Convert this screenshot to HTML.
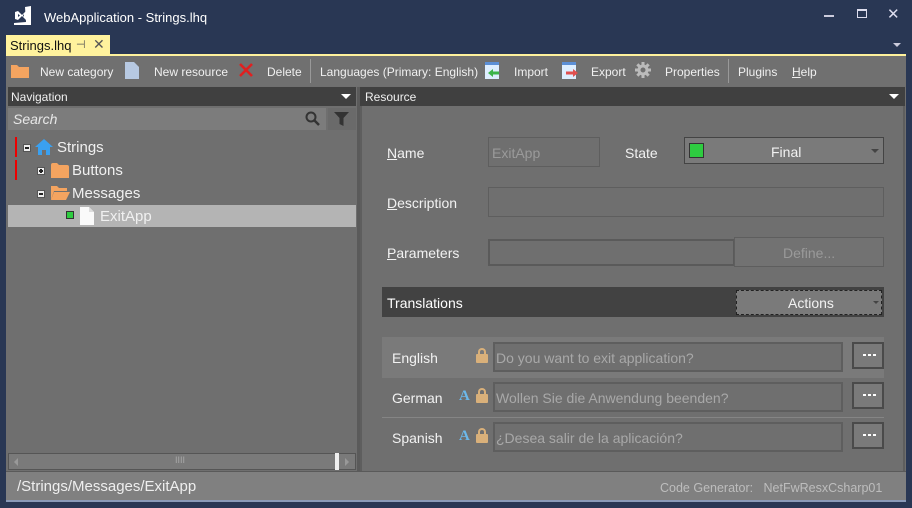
<!DOCTYPE html>
<html><head><meta charset="utf-8"><style>
*{margin:0;padding:0;box-sizing:border-box}
body{width:912px;height:508px;background:#293754;font-family:"Liberation Sans",sans-serif;position:relative;overflow:hidden;color:#f0f0f0}
.a{position:absolute}
.t{font-size:13px;white-space:nowrap}
.tb{font-size:12px;white-space:nowrap;position:absolute;top:65px}
.inp{position:absolute;background:#6f6f6f;border:1px solid #5e5e5e}
.lbl{position:absolute;font-size:14px;color:#f2f2f2;white-space:nowrap}
.btn3{position:absolute;width:32px;height:27px;border:2px solid #4a4a4a;background:#7a7a7a}
.btn3:after{content:"";position:absolute;left:9px;top:10px;width:3px;height:2px;background:#fff;box-shadow:5px 0 #fff,10px 0 #fff}
.lock{position:absolute;width:12px;height:9px;background:#d9b07a;border-radius:1px}
.lock:before{content:"";position:absolute;left:2px;top:-6px;width:8px;height:8px;border:2px solid #d9b07a;border-bottom:none;border-radius:4px 4px 0 0;box-sizing:border-box}
.A{position:absolute;color:#6cb8ea;font-weight:bold;font-family:"Liberation Serif",serif;font-size:15px}
</style></head><body>
<!-- title -->
<svg class="a" style="left:12px;top:6px" width="22" height="20" viewBox="0 0 22 20"><path d="M13 1 L19 0 L19 19 L2 19 L2 17 L14 16 Z" fill="#fff"/><path d="M3 6 L6 5 L10 9 L14 5 L14 14 L10 10 L6 14 L3 13 Z M6 8 L6 11 L8 9.5Z M11 9.5 L12 8 L12 11Z" fill="#fff" fill-rule="evenodd"/></svg>
<div class="a t" style="left:44px;top:10px;color:#fff">WebApplication - Strings.lhq</div>
<div class="a" style="left:824px;top:15px;width:10px;height:2px;background:#ccd"></div>
<div class="a" style="left:857px;top:9px;width:10px;height:9px;border:1px solid #dde;border-top-width:2px"></div>
<div class="a t" style="left:887px;top:5px;font-size:15px;color:#dde">✕</div>
<div class="a" style="left:893px;top:43px;border:4px solid transparent;border-top:4px solid #ccd"></div>
<!-- tab -->
<div class="a" style="left:6px;top:35px;width:104px;height:20px;background:#fff29d"></div>
<div class="a t" style="left:10px;top:38px;color:#111">Strings.lhq</div>
<div class="a t" style="left:76px;top:38px;color:#555;font-size:11px">⊣</div>
<div class="a t" style="left:93px;top:36px;color:#555;font-size:14px">✕</div>
<div class="a" style="left:6px;top:54px;width:900px;height:2px;background:#fff29d"></div>
<!-- doc area -->
<div class="a" style="left:6px;top:56px;width:900px;height:446px;background:#6f6f6f;border-bottom:2px solid #8a9ab8"></div>
<div class="a" style="left:6px;top:56px;width:900px;height:30px;background:#707070"></div>
<!-- toolbar -->
<svg class="a" style="left:11px;top:63px" width="18" height="15"><path d="M0 2 h6 l2 2 h10 v11 h-18z" fill="#f4a460"/></svg>
<div class="tb" style="left:40px">New category</div>
<svg class="a" style="left:125px;top:62px" width="14" height="17"><path d="M0 0 h9 l5 5 v12 h-14z" fill="#b7c9e2"/></svg>
<div class="tb" style="left:154px">New resource</div>
<svg class="a" style="left:239px;top:63px" width="14" height="14"><path d="M1 1 L13 13 M13 1 L1 13" stroke="#e02020" stroke-width="2.6"/></svg>
<div class="tb" style="left:267px">Delete</div>
<div class="a" style="left:310px;top:59px;width:1px;height:24px;background:#999"></div>
<div class="tb" style="left:320px">Languages (Primary: English)</div>
<svg class="a" style="left:485px;top:62px" width="16" height="18"><rect x="0" y="0" width="14" height="17" fill="#ddeeff"/><rect x="0" y="0" width="14" height="3" fill="#5b8fd6"/><path d="M3 11 l5 -4 v2.5 h6 v3 h-6 v2.5z" fill="#3bb44a"/></svg>
<div class="tb" style="left:514px">Import</div>
<svg class="a" style="left:562px;top:62px" width="17" height="18"><rect x="0" y="0" width="14" height="17" fill="#ddeeff"/><rect x="0" y="0" width="14" height="3" fill="#5b8fd6"/><path d="M16 11 l-5 -4 v2.5 h-7 v3 h7 v2.5z" fill="#e05050"/></svg>
<div class="tb" style="left:591px">Export</div>
<svg class="a" style="left:635px;top:62px" width="16" height="16" viewBox="0 0 16 16"><g fill="#bbb"><circle cx="8" cy="8" r="5.5"/><rect x="6.5" y="0" width="3" height="16"/><rect x="0" y="6.5" width="16" height="3"/><rect x="6.5" y="0" width="3" height="16" transform="rotate(45 8 8)"/><rect x="6.5" y="0" width="3" height="16" transform="rotate(-45 8 8)"/></g><circle cx="8" cy="8" r="2.5" fill="#707070"/></svg>
<div class="tb" style="left:665px">Properties</div>
<div class="a" style="left:728px;top:59px;width:1px;height:24px;background:#999"></div>
<div class="tb" style="left:738px">Plugins</div>
<div class="tb" style="left:792px"><u>H</u>elp</div>
<!-- nav -->
<div class="a" style="left:8px;top:87px;width:348px;height:19px;background:#404040"></div>
<div class="a t" style="left:11px;top:90px;font-size:12px">Navigation</div>
<div class="a" style="left:341px;top:94px;border:5px solid transparent;border-top:5px solid #fff"></div>
<div class="a" style="left:8px;top:108px;width:318px;height:22px;background:#7c7c7c"></div>
<div class="a t" style="left:13px;top:111px;font-size:14px;font-style:italic;color:#e8e8e8">Search</div>
<svg class="a" style="left:305px;top:111px" width="16" height="16"><circle cx="6" cy="6" r="4.5" fill="none" stroke="#333" stroke-width="2"/><path d="M9 9 l5 5" stroke="#333" stroke-width="2.5"/></svg>
<div class="a" style="left:328px;top:108px;width:28px;height:22px;background:#6a6a6a"></div>
<svg class="a" style="left:334px;top:112px" width="16" height="15"><path d="M0 0 h15 l-5.5 6 v8 l-4 -2 v-6z" fill="#333"/></svg>
<div class="a" style="left:15px;top:137px;width:2px;height:20px;background:#e00"></div>
<div class="a" style="left:15px;top:160px;width:2px;height:20px;background:#e00"></div>
<div class="a" style="left:23px;top:144px;width:8px;height:8px;background:#eee;border:1px solid #555"></div><div class="a" style="left:25px;top:147px;width:4px;height:2px;background:#222"></div>
<svg class="a" style="left:35px;top:139px" width="18" height="16"><path d="M9 0 L18 8 H15 V16 H11 V11 H7 V16 H3 V8 H0Z" fill="#3aa0f0"/></svg>
<div class="a t" style="left:57px;top:139px;font-size:15px">Strings</div>
<div class="a" style="left:37px;top:167px;width:8px;height:8px;background:#eee;border:1px solid #555"></div><div class="a" style="left:39px;top:170px;width:4px;height:2px;background:#222"></div><div class="a" style="left:40px;top:169px;width:2px;height:4px;background:#222"></div>
<svg class="a" style="left:51px;top:163px" width="18" height="15"><path d="M0 2 q0 -2 2 -2 h4 l2 2 h8 q2 0 2 2 v11 h-18z" fill="#f4a460"/></svg>
<div class="a t" style="left:72px;top:162px;font-size:15px">Buttons</div>
<div class="a" style="left:37px;top:190px;width:8px;height:8px;background:#eee;border:1px solid #555"></div><div class="a" style="left:39px;top:193px;width:4px;height:2px;background:#222"></div>
<svg class="a" style="left:51px;top:186px" width="19" height="14"><path d="M0 0 h6 l2 2 h8 v3 h-13 l-3 9z" fill="#f4a460"/><path d="M3 6 h16 l-4 8 h-15z" fill="#f4a460"/></svg>
<div class="a t" style="left:72px;top:185px;font-size:15px">Messages</div>
<div class="a" style="left:8px;top:205px;width:348px;height:22px;background:#b4b4b4"></div>
<div class="a" style="left:66px;top:211px;width:8px;height:8px;background:#2ecc40;border:1px solid #333"></div>
<svg class="a" style="left:80px;top:207px" width="14" height="18"><path d="M0 0 h9 l5 5 v13 h-14z" fill="#fafafa"/><path d="M9 0 v5 h5" fill="#ddd"/></svg>
<div class="a t" style="left:100px;top:208px;font-size:15px">ExitApp</div>
<div class="a" style="left:8px;top:453px;width:348px;height:17px;background:#7a7a7a;border:1px solid #555"></div>
<div class="a" style="left:14px;top:458px;border:4px solid transparent;border-right:4px solid #999;border-left:none"></div>
<div class="a" style="left:345px;top:458px;border:4px solid transparent;border-left:4px solid #999;border-right:none"></div>
<div class="a" style="left:335px;top:453px;width:4px;height:17px;background:#eee"></div>
<div class="a t" style="left:175px;top:455px;font-size:9px;color:#aaa">IIII</div>
<div class="a" style="left:357px;top:87px;width:3px;height:384px;background:#5a5a5a"></div>
<!-- resource -->
<div class="a" style="left:360px;top:87px;width:545px;height:19px;background:#404040"></div>
<div class="a t" style="left:365px;top:90px;font-size:12px">Resource</div>
<div class="a" style="left:889px;top:94px;border:5px solid transparent;border-top:5px solid #fff"></div>
<div class="a" style="left:360px;top:106px;width:2px;height:365px;background:#5e5e5e"></div>
<div class="a" style="left:903px;top:106px;width:2px;height:365px;background:#5e5e5e"></div>
<div class="lbl" style="left:387px;top:145px"><u>N</u>ame</div>
<div class="inp" style="left:488px;top:137px;width:112px;height:30px"></div>
<div class="lbl" style="left:492px;top:145px;color:#9a9a9a">ExitApp</div>
<div class="lbl" style="left:625px;top:145px">State</div>
<div class="a" style="left:684px;top:137px;width:200px;height:27px;background:#7a7a7a;border:1px solid #444"></div>
<div class="a" style="left:689px;top:143px;width:15px;height:15px;background:#2ecc40;border:1px solid #333"></div>
<div class="lbl" style="left:771px;top:144px">Final</div>
<div class="a" style="left:871px;top:149px;border:4px solid transparent;border-top:4px solid #444"></div>
<div class="lbl" style="left:387px;top:195px"><u>D</u>escription</div>
<div class="inp" style="left:488px;top:187px;width:396px;height:30px"></div>
<div class="lbl" style="left:387px;top:245px"><u>P</u>arameters</div>
<div class="inp" style="left:488px;top:239px;width:247px;height:27px;border-color:#5a5a5a;border-width:2px"></div>
<div class="a" style="left:734px;top:237px;width:150px;height:30px;background:#727272;border:1px solid #5e5e5e"></div>
<div class="lbl" style="left:783px;top:245px;color:#9a9a9a">Define...</div>
<div class="a" style="left:382px;top:287px;width:502px;height:30px;background:#424242"></div>
<div class="lbl" style="left:387px;top:295px;color:#fff">Translations</div>
<div class="a" style="left:736px;top:290px;width:146px;height:25px;background:#7a7a7a;border:1px dashed #222"></div>
<div class="lbl" style="left:788px;top:295px">Actions</div>
<div class="a" style="left:873px;top:301px;border:3px solid transparent;border-top:3px solid #444"></div>
<div class="a" style="left:382px;top:337px;width:502px;height:41px;background:#7a7a7a"></div>
<div class="lbl" style="left:392px;top:350px">English</div>
<div class="lock" style="left:476px;top:354px"></div>
<div class="inp" style="left:493px;top:342px;width:350px;height:30px;border-width:2px"></div>
<div class="lbl" style="left:496px;top:350px;color:#a8a8a8">Do you want to exit application?</div>
<div class="btn3" style="left:852px;top:342px"></div>
<div class="lbl" style="left:392px;top:390px">German</div>
<div class="A" style="left:459px;top:388px">A</div>
<div class="lock" style="left:476px;top:394px"></div>
<div class="inp" style="left:493px;top:382px;width:350px;height:30px;border-width:2px"></div>
<div class="lbl" style="left:496px;top:390px;color:#a8a8a8">Wollen Sie die Anwendung beenden?</div>
<div class="btn3" style="left:852px;top:382px"></div>
<div class="a" style="left:382px;top:417px;width:502px;height:1px;background:#858585"></div>
<div class="lbl" style="left:392px;top:430px">Spanish</div>
<div class="A" style="left:459px;top:428px">A</div>
<div class="lock" style="left:476px;top:434px"></div>
<div class="inp" style="left:493px;top:422px;width:350px;height:30px;border-width:2px"></div>
<div class="lbl" style="left:496px;top:430px;color:#a8a8a8">¿Desea salir de la aplicación?</div>
<div class="btn3" style="left:852px;top:422px"></div>
<!-- status -->
<div class="a" style="left:6px;top:471px;width:900px;height:29px;background:#808080;border-top:1px solid #5a5a5a"></div>
<div class="lbl" style="left:17px;top:478px;color:#eee;font-size:15px">/Strings/Messages/ExitApp</div>
<div class="a" style="left:660px;top:481px;color:#bdbdbd;font-size:12.5px;white-space:nowrap">Code Generator:&nbsp;&nbsp; NetFwResxCsharp01</div>
</body></html>
